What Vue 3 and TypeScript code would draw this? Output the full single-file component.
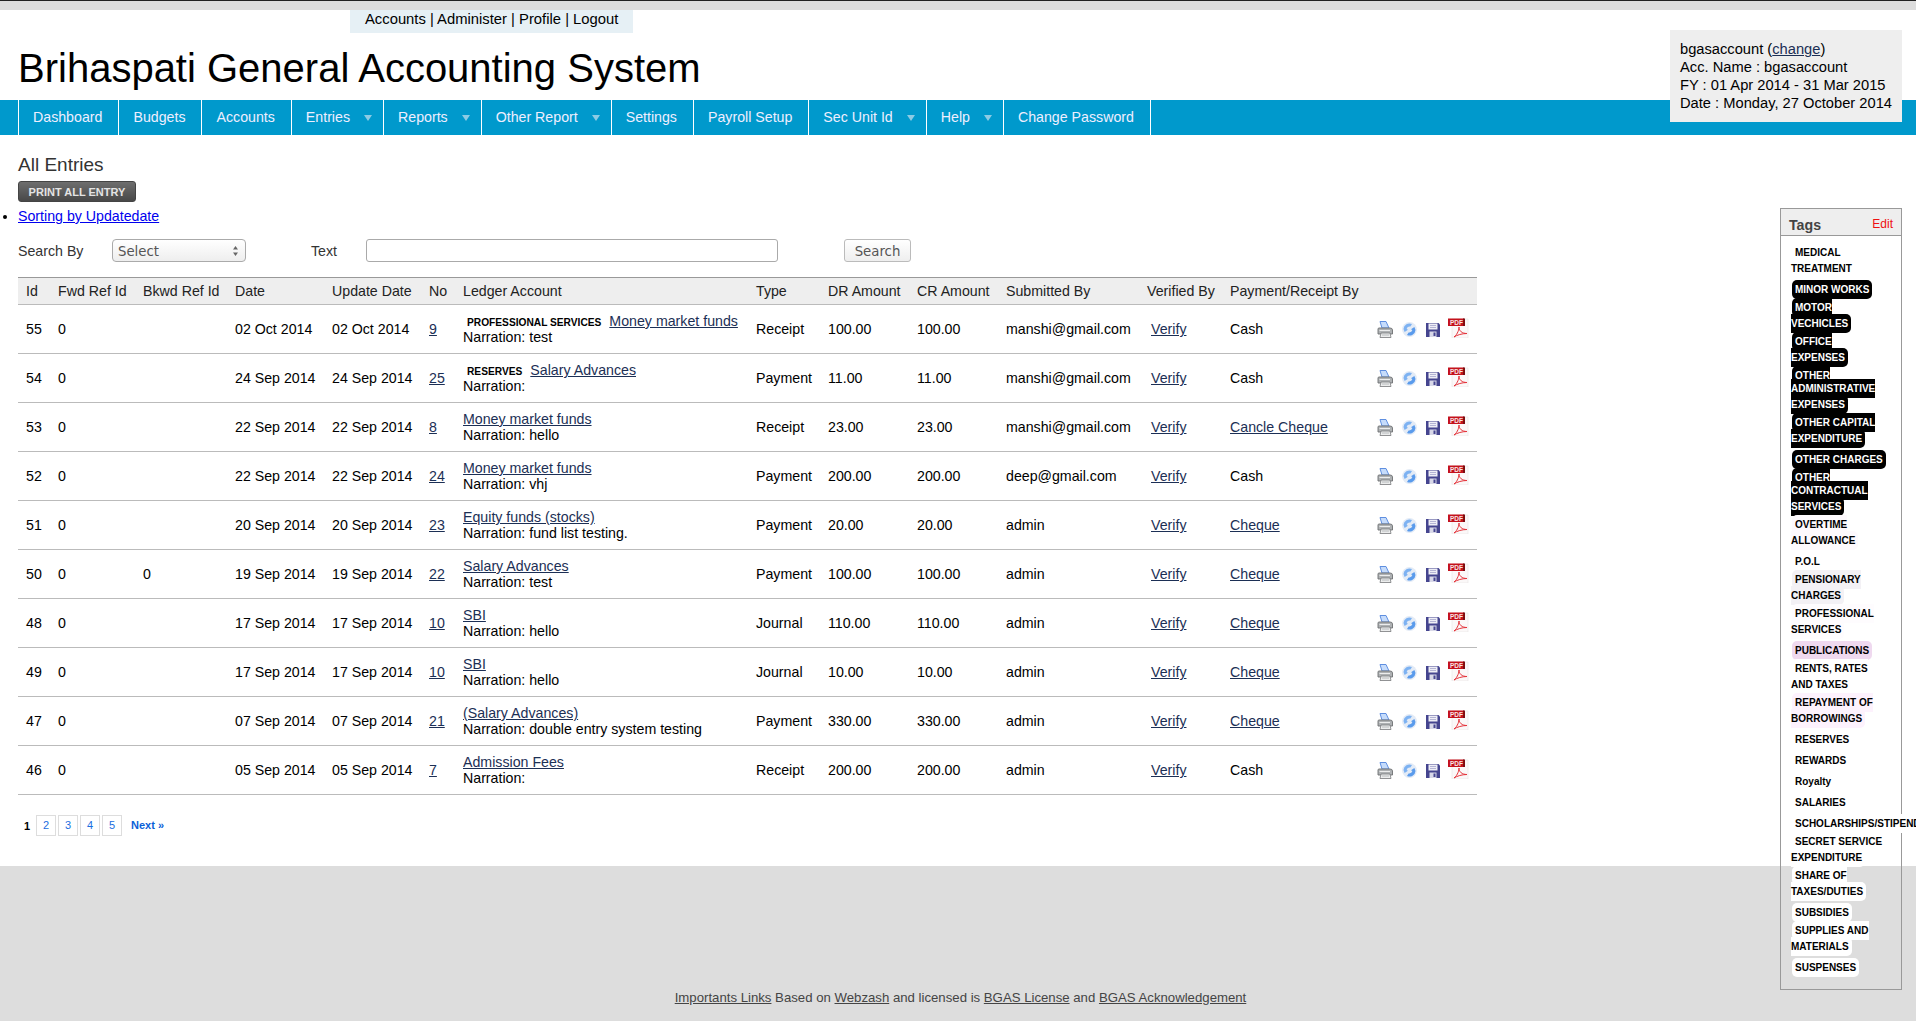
<script setup lang="ts">
interface Entry {
  id: number;
  fwd: string;
  bkwd: string;
  date: string;
  no: number;
  tag?: string;
  ledger: string;
  narration: string;
  type: string;
  amount: string;
  by: string;
  pay: string;
  payLink?: boolean;
}

interface Tag {
  lines: string[];
  color?: string;
  dark?: boolean;
}

const navItems = [
  { label: "Dashboard" },
  { label: "Budgets" },
  { label: "Accounts" },
  { label: "Entries", caret: true },
  { label: "Reports", caret: true },
  { label: "Other Report", caret: true },
  { label: "Settings" },
  { label: "Payroll Setup" },
  { label: "Sec Unit Id", caret: true },
  { label: "Help", caret: true },
  { label: "Change Password" },
];

const columns = [
  { label: "Id", width: 32 },
  { label: "Fwd Ref Id", width: 85 },
  { label: "Bkwd Ref Id", width: 92 },
  { label: "Date", width: 97 },
  { label: "Update Date", width: 97 },
  { label: "No", width: 34 },
  { label: "Ledger Account", width: 293 },
  { label: "Type", width: 72 },
  { label: "DR Amount", width: 89 },
  { label: "CR Amount", width: 89 },
  { label: "Submitted By", width: 141 },
  { label: "Verified By", width: 83 },
  { label: "Payment/Receipt By", width: 150 },
  { label: "", width: 105 },
];

const entries: Entry[] = [
  { id: 55, fwd: "0", bkwd: "", date: "02 Oct 2014", no: 9, tag: "PROFESSIONAL SERVICES", ledger: "Money market funds", narration: "test", type: "Receipt", amount: "100.00", by: "manshi@gmail.com", pay: "Cash" },
  { id: 54, fwd: "0", bkwd: "", date: "24 Sep 2014", no: 25, tag: "RESERVES", ledger: "Salary Advances", narration: "", type: "Payment", amount: "11.00", by: "manshi@gmail.com", pay: "Cash" },
  { id: 53, fwd: "0", bkwd: "", date: "22 Sep 2014", no: 8, ledger: "Money market funds", narration: "hello", type: "Receipt", amount: "23.00", by: "manshi@gmail.com", pay: "Cancle Cheque", payLink: true },
  { id: 52, fwd: "0", bkwd: "", date: "22 Sep 2014", no: 24, ledger: "Money market funds", narration: "vhj", type: "Payment", amount: "200.00", by: "deep@gmail.com", pay: "Cash" },
  { id: 51, fwd: "0", bkwd: "", date: "20 Sep 2014", no: 23, ledger: "Equity funds (stocks)", narration: "fund list testing.", type: "Payment", amount: "20.00", by: "admin", pay: "Cheque", payLink: true },
  { id: 50, fwd: "0", bkwd: "0", date: "19 Sep 2014", no: 22, ledger: "Salary Advances", narration: "test", type: "Payment", amount: "100.00", by: "admin", pay: "Cheque", payLink: true },
  { id: 48, fwd: "0", bkwd: "", date: "17 Sep 2014", no: 10, ledger: "SBI", narration: "hello", type: "Journal", amount: "110.00", by: "admin", pay: "Cheque", payLink: true },
  { id: 49, fwd: "0", bkwd: "", date: "17 Sep 2014", no: 10, ledger: "SBI", narration: "hello", type: "Journal", amount: "10.00", by: "admin", pay: "Cheque", payLink: true },
  { id: 47, fwd: "0", bkwd: "", date: "07 Sep 2014", no: 21, ledger: "(Salary Advances)", narration: "double entry system testing", type: "Payment", amount: "330.00", by: "admin", pay: "Cheque", payLink: true },
  { id: 46, fwd: "0", bkwd: "", date: "05 Sep 2014", no: 7, ledger: "Admission Fees", narration: "", type: "Receipt", amount: "200.00", by: "admin", pay: "Cash" },
];

const tags: Tag[] = [
  { lines: ["MEDICAL", "TREATMENT"] },
  { lines: ["MINOR WORKS"], dark: true },
  { lines: ["MOTOR", "VECHICLES"], dark: true },
  { lines: ["OFFICE", "EXPENSES"], dark: true },
  { lines: ["OTHER", "ADMINISTRATIVE", "EXPENSES"], dark: true },
  { lines: ["OTHER CAPITAL", "EXPENDITURE"], dark: true },
  { lines: ["OTHER CHARGES"], dark: true },
  { lines: ["OTHER", "CONTRACTUAL", "SERVICES"], dark: true },
  { lines: ["OVERTIME", "ALLOWANCE"], color: "#fdf9fd" },
  { lines: ["P.O.L"] },
  { lines: ["PENSIONARY", "CHARGES"], color: "#f3f1f5" },
  { lines: ["PROFESSIONAL", "SERVICES"], color: "#fefcfe" },
  { lines: ["PUBLICATIONS"], color: "#efd9ef" },
  { lines: ["RENTS, RATES", "AND TAXES"] },
  { lines: ["REPAYMENT OF", "BORROWINGS"], color: "#fdf2fd" },
  { lines: ["RESERVES"] },
  { lines: ["REWARDS"] },
  { lines: ["Royalty"] },
  { lines: ["SALARIES"] },
  { lines: ["SCHOLARSHIPS/STIPEND"] },
  { lines: ["SECRET SERVICE", "EXPENDITURE"] },
  { lines: ["SHARE OF", "TAXES/DUTIES"] },
  { lines: ["SUBSIDIES"] },
  { lines: ["SUPPLIES AND", "MATERIALS"] },
  { lines: ["SUSPENSES"] },
];
</script>

<template>
  <div class="page">
    <div class="topbar"></div>
    <div class="toplinks">Accounts | Administer | Profile | Logout</div>
    <h1 class="title">Brihaspati General Accounting System</h1>

    <nav class="nav">
      <a
        v-for="item in navItems"
        :key="item.label"
        class="nav-item"
        :class="{ 'nav-item--caret': item.caret }"
      >{{ item.label }}</a>
    </nav>

    <div class="account">
      <div>bgasaccount (<a class="link">change</a>)</div>
      <div>Acc. Name : bgasaccount</div>
      <div>FY : 01 Apr 2014 - 31 Mar 2015</div>
      <div>Date : Monday, 27 October 2014</div>
    </div>

    <main class="content">
      <h2 class="heading">All Entries</h2>
      <button class="print-btn">PRINT ALL ENTRY</button>
      <ul class="sort">
        <li><a class="sort-link">Sorting by Updatedate</a></li>
      </ul>

      <div class="search">
        <label class="search-label">Search By</label>
        <div class="select">
          <span>Select</span>
          <svg width="7" height="12" viewBox="0 0 7 12">
            <path d="M3.5 1 L6 4.5 H1 Z M3.5 11 L1 7.5 H6 Z" fill="#666" />
          </svg>
        </div>
        <label class="search-label search-label--text">Text</label>
        <input class="text-input" type="text" />
        <button class="search-btn">Search</button>
      </div>

      <table class="entries">
        <colgroup>
          <col v-for="col in columns" :key="col.label" :style="{ width: col.width + 'px' }" />
        </colgroup>
        <thead>
          <tr>
            <th v-for="col in columns" :key="col.label">{{ col.label }}</th>
          </tr>
        </thead>
        <tbody>
          <tr v-for="entry in entries" :key="entry.id">
            <td>{{ entry.id }}</td>
            <td>{{ entry.fwd }}</td>
            <td>{{ entry.bkwd }}</td>
            <td>{{ entry.date }}</td>
            <td>{{ entry.date }}</td>
            <td><a class="link">{{ entry.no }}</a></td>
            <td :class="{ 'ledger--tagged': entry.tag }">
              <div>
                <span v-if="entry.tag" class="entry-tag">{{ entry.tag }}</span>
                <a class="link">{{ entry.ledger }}</a>
              </div>
              <div>Narration: {{ entry.narration }}</div>
            </td>
            <td>{{ entry.type }}</td>
            <td>{{ entry.amount }}</td>
            <td>{{ entry.amount }}</td>
            <td>{{ entry.by }}</td>
            <td><a class="link verify">Verify</a></td>
            <td>
              <a v-if="entry.payLink" class="link">{{ entry.pay }}</a>
              <template v-else>{{ entry.pay }}</template>
            </td>
            <td>
              <div class="actions">
                <svg class="icon-print" width="16" height="17" viewBox="0 0 16 17">
                  <path d="M3 0.5 L9 0.5 L12 7 L5 7 Z" fill="#c6dcfb" stroke="#5f8fe0" stroke-width="1" />
                  <path d="M1 8 Q1 7 2 7 H13 Q15.5 7 15.5 9 V13 H1 Z" fill="#aeb1b3" stroke="#6e7173" stroke-width="0.9" />
                  <path d="M4 12 H13 L14 16.5 H3 Z" fill="#eceded" stroke="#77797b" stroke-width="0.8" />
                  <path d="M2.5 9.5 H13" stroke="#eceded" stroke-width="1" />
                  <path d="M5 14 H12" stroke="#a5a7a9" stroke-width="0.7" />
                </svg>
                <svg class="icon-sync" width="15" height="15" viewBox="0 0 15 15">
                  <circle cx="7.5" cy="7.5" r="7.4" fill="#e3ebf6" />
                  <path d="M1.5 7 A6 6 0 0 1 10 2 L8.4 4.6 A3.4 3.4 0 0 0 4.6 7 L6 7.8 L2.6 10 Z" fill="#7db2f2" />
                  <path d="M13.5 8 A6 6 0 0 1 5 13 L6.6 10.4 A3.4 3.4 0 0 0 10.4 8 L9 7.2 L12.4 5 Z" fill="#5a9bec" />
                </svg>
                <svg class="icon-save" width="14" height="14" viewBox="0 0 14 14">
                  <path d="M0 0 H12.5 L14 1.5 V14 H0 Z" fill="#45458f" />
                  <rect x="2.5" y="0.5" width="9" height="6" fill="#eeeef6" />
                  <path d="M4 2.5 H10 M4 4.5 H10" stroke="#a4a4cc" stroke-width="0.8" />
                  <rect x="3.5" y="8.5" width="7" height="5.5" fill="#d8d8e8" />
                  <rect x="7.5" y="9.5" width="2" height="3.5" fill="#45458f" />
                </svg>
                <svg class="icon-pdf" width="21" height="20" viewBox="0 0 21 20">
                  <path d="M4 1 H20 V20 H4 Z" fill="#fbf8f8" stroke="#e8e4e4" stroke-width="0.6" />
                  <rect x="0" y="0.5" width="16" height="7.5" fill="#c4121c" />
                  <rect x="15" y="0.5" width="2" height="7.5" fill="#7c0c10" />
                  <text x="2" y="6.6" class="pdf-text">PDF</text>
                  <path d="M6 19 C10 16 11 11 11 9 C11 13 14 15.5 19 15.5 C14 15.5 9 17 6 19 Z" fill="none" stroke="#e4323a" stroke-width="1" />
                </svg>
              </div>
            </td>
          </tr>
        </tbody>
      </table>

      <div class="pager">
        <strong class="pager-current">1</strong>
        <a v-for="n in [2, 3, 4, 5]" :key="n" class="pager-num">{{ n }}</a>
        <a class="pager-next">Next »</a>
      </div>
    </main>

    <footer class="footer">
      <a class="foot-link">Importants Links</a> Based on <a class="foot-link">Webzash</a> and licensed is
      <a class="foot-link">BGAS License</a> and <a class="foot-link">BGAS Acknowledgement</a>
    </footer>

    <aside class="tags">
      <div class="tags-head">
        <span class="tags-title">Tags</span>
        <a class="tags-edit">Edit</a>
      </div>
      <ul class="tags-list">
        <li
          v-for="tag in tags"
          :key="tag.lines.join(' ')"
          class="tag-row"
          :class="'tag-row--' + tag.lines.length"
        >
          <a
            class="tag"
            :class="{ 'tag--dark': tag.dark }"
            :style="tag.color ? { backgroundColor: tag.color } : undefined"
          ><template v-for="(line, i) in tag.lines" :key="line"><br v-if="i > 0" /><span class="tag-line">{{ line }}</span></template></a>
        </li>
      </ul>
    </aside>
  </div>
</template>

<style>
html,
body {
  margin: 0;
  overflow: hidden;
}
</style>

<style scoped>
.page {
  position: relative;
  display: flex;
  flex-direction: column;
  min-height: 1021px;
  overflow: hidden;
  font-family: "Liberation Sans", Arial, sans-serif;
  font-size: 14.2px;
  color: #000;
  background: #fff;
}

.topbar {
  height: 9px;
  border-top: 1px solid #222;
  background: #ddd;
}

.toplinks {
  align-self: flex-start;
  margin-left: 350px;
  padding: 0 15px;
  height: 23px;
  font-size: 14.8px;
  line-height: 19px;
  background: #e6f0f5;
}

.title {
  margin: 0;
  height: 67px;
  padding-left: 18px;
  font-size: 40px;
  font-weight: normal;
  line-height: 70px;
}

.nav {
  display: flex;
  height: 35px;
  padding-left: 18px;
  background: #0099cc;
}

.nav-item {
  position: relative;
  padding: 0 16px 0 14px;
  border-left: 1px solid #fff;
  color: #eef;
  line-height: 35px;
}

.nav-item:last-child {
  border-right: 1px solid #fff;
}

.nav-item--caret {
  padding-right: 33px;
}

.nav-item--caret::after {
  content: "";
  position: absolute;
  right: 11px;
  top: 15px;
  border-left: 4.5px solid transparent;
  border-right: 4.5px solid transparent;
  border-top: 6px solid #8ccbe4;
}

.account {
  position: absolute;
  top: 30px;
  right: 14px;
  box-sizing: border-box;
  width: 232px;
  height: 92px;
  padding: 10px;
  background: #eee;
  font-size: 14.7px;
  line-height: 18px;
  white-space: nowrap;
}

.link {
  color: #1c2f55;
  text-decoration: underline;
}

.content {
  flex: 1;
  padding: 20px 0 0 18px;
}

.heading {
  margin: 0;
  height: 26px;
  font-size: 19px;
  font-weight: normal;
  line-height: 20px;
  color: #333;
}

.print-btn {
  display: block;
  width: 118px;
  height: 21px;
  padding: 0;
  border: 1px solid #444;
  border-radius: 3px;
  background: linear-gradient(#6e6e6e, #484848);
  color: #e4e4e4;
  font: bold 11px "Liberation Sans", Arial, sans-serif;
}

.sort {
  margin: 0;
  padding: 5px 0 0;
  height: 36px;
  box-sizing: border-box;
  line-height: 18px;
}

.sort-link {
  color: #00e;
  text-decoration: underline;
}

.search {
  display: flex;
  align-items: center;
  height: 24px;
  margin-bottom: 15px;
}

.search-label {
  width: 94px;
  margin-top: 2px;
  color: #333;
}

.search-label--text {
  width: 55px;
  margin-left: 65px;
}

.select {
  display: flex;
  align-items: center;
  justify-content: space-between;
  box-sizing: border-box;
  width: 134px;
  height: 23px;
  padding: 2px 6px 0 5px;
  border: 1px solid #aaa;
  border-radius: 4px;
  background: linear-gradient(#fff, #eee);
  color: #555;
  font: 13.3px "DejaVu Sans", sans-serif;
}

.text-input {
  box-sizing: border-box;
  width: 412px;
  height: 23px;
  border: 1px solid #aaa;
  border-radius: 3px;
  background: #fff;
}

.search-btn {
  width: 67px;
  height: 23px;
  margin-left: 66px;
  padding: 2px 0 0;
  border: 1px solid #bbb;
  border-radius: 3px;
  background: linear-gradient(#fff, #eee);
  color: #555;
  font: 13.3px "DejaVu Sans", sans-serif;
}

.entries {
  width: 1459px;
  table-layout: fixed;
  border-collapse: collapse;
  border-spacing: 0;
}

.entries th {
  height: 26px;
  padding: 0 8px;
  border-top: 1px solid #999;
  border-bottom: 1px solid #bbb;
  background: #eee;
  color: #222;
  font-weight: normal;
  text-align: left;
  white-space: nowrap;
}

.entries td {
  height: 48px;
  padding: 0 8px;
  border-bottom: 1px solid #bbb;
  line-height: 16px;
  white-space: nowrap;
}

.entries td.ledger--tagged {
  line-height: 14px;
}

.verify {
  margin-left: 4px;
}

.entry-tag {
  margin-left: 1px;
  margin-right: 5px;
  padding: 0 3px;
  font-size: 10.2px;
  font-weight: bold;
}

.actions {
  display: flex;
  align-items: center;
  margin-left: -3px;
}

.actions svg {
  flex: none;
}

.icon-print {
  margin-top: 1px;
  margin-right: 9px;
}

.icon-sync {
  margin-top: 1px;
  margin-right: 9px;
}

.icon-save {
  margin-top: 1px;
  margin-right: 8px;
}

.icon-pdf {
  margin-top: -2px;
}

.pdf-text {
  fill: #f8e4e4;
  font-size: 6.5px;
  font-weight: bold;
}

.pager {
  display: flex;
  align-items: center;
  height: 21px;
  margin-top: 20px;
  font-size: 11px;
}

.pager-current {
  width: 18px;
  padding-left: 6px;
  box-sizing: border-box;
}

.pager-num {
  box-sizing: border-box;
  width: 20px;
  height: 21px;
  margin-right: 2px;
  border: 1px solid #ddd;
  color: #1a6ee0;
  line-height: 18px;
  text-align: center;
}

.pager-next {
  margin-left: 7px;
  margin-top: -1px;
  color: #0a60d8;
  font-weight: bold;
}

.footer {
  box-sizing: border-box;
  height: 155px;
  padding: 124px 0 0 5px;
  background: #ddd;
  color: #444;
  font-size: 13.2px;
  line-height: 16px;
  text-align: center;
}

.foot-link {
  color: #444;
  text-decoration: underline;
}

.tags {
  position: absolute;
  top: 208px;
  left: 1780px;
  box-sizing: border-box;
  width: 122px;
  height: 782px;
  border: 1px solid #999;
}

.tags-head {
  display: flex;
  align-items: center;
  justify-content: space-between;
  height: 26px;
  padding: 0 8px;
  border-bottom: 1px solid #999;
  background: #eee;
}

.tags-title {
  margin-top: 6px;
  color: #444;
  font-size: 14.2px;
  font-weight: bold;
}

.tags-edit {
  margin-top: 3px;
  color: #e11;
  font-size: 12px;
}

.tags-list {
  margin: 0;
  padding: 9px 0 0 10px;
  list-style: none;
}

.tag-row {
  padding-bottom: 2px;
  font-size: 10px;
  line-height: 16px;
  white-space: nowrap;
}

.tag-row--1 {
  padding-top: 3px;
}

.tag-row--3 {
  padding-top: 3px;
  line-height: 10px;
}

.tag-row--3 br + .tag-line {
  line-height: 16px;
}

.tag {
  margin-left: 1px;
  padding: 4px 3px;
  border-radius: 5px;
  background: #fff;
  color: #000;
  font-weight: bold;
}

.tag--dark {
  background: #000;
  color: #fff;
}
</style>
